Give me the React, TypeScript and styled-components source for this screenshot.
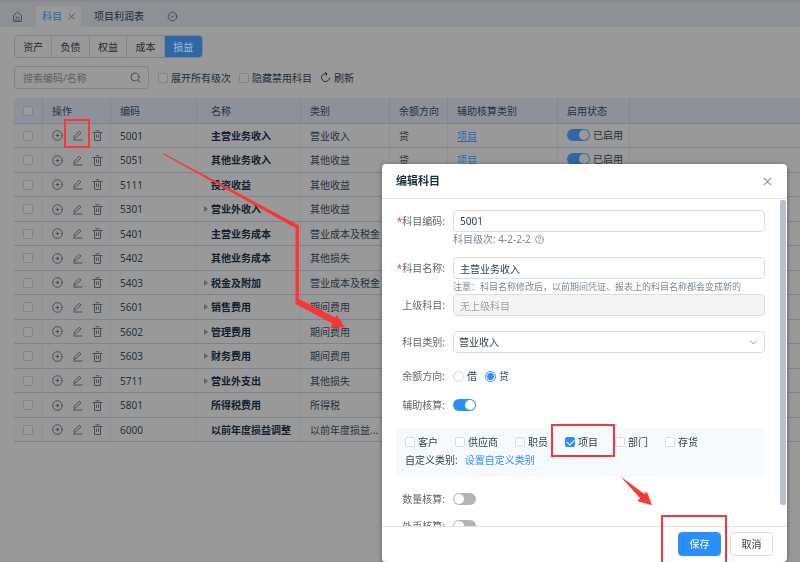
import React from 'react';
import styled, { createGlobalStyle, css } from 'styled-components';

const GlobalStyle = createGlobalStyle`
  * { box-sizing: border-box; }
  html, body { margin: 0; background: #999999; }
  body, button, input, select {
    font-family: "Noto Sans", "Noto Sans CJK SC", sans-serif;
    font-size: 10px;
  }
  body { line-height: 16px; color: #1f2f3d; overflow: hidden; }
  button { cursor: pointer; }
`;

const Page = styled.div`
  position: relative;
  min-height: 100vh;
  background: #999999;
`;

const TabBar = styled.nav`
  display: flex;
  align-items: center;
  height: 27px;
  padding: 3px 12px 0;
  background: #8d9095;
  border-top: 2px solid #87898c;
`;

const IconButton = styled.button`
  display: inline-flex;
  align-items: center;
  justify-content: center;
  width: 11px;
  height: 11px;
  padding: 0;
  border: 0;
  background: none;
  color: #46505a;
`;

const HomeButton = styled(IconButton)`
  margin-right: 13px;
`;

const MoreButton = styled(IconButton)`
  margin-left: 15px;
`;

const DialogClose = styled(IconButton)`
  color: #8b8f94;
`;

const Tab = styled.div<{ $active?: boolean }>`
  display: flex;
  align-items: center;
  gap: 4px;
  height: 21px;
  padding: 0 ${p => (p.$active ? 4 : 8)}px 0 6px;
  border-radius: 3px 3px 0 0;
  background: ${p => (p.$active ? '#999999' : 'transparent')};
  margin-right: ${p => (p.$active ? 7 : 0)}px;
`;

const TabLink = styled.button<{ $active?: boolean }>`
  padding: 0;
  border: 0;
  background: none;
  line-height: 16px;
  color: ${p => (p.$active ? '#2b69ac' : '#1f2a35')};
`;

const Content = styled.main`
  padding: 8px 0 0 14px;
`;

const Segments = styled.div`
  display: grid;
  grid-template-columns: repeat(5, 1fr);
  width: 189px;
  height: 23px;
  border: 1px solid #7f8388;
  border-radius: 4px;
  overflow: hidden;
`;

const Segment = styled.button<{ $active?: boolean }>`
  padding: 0;
  border: 0;
  border-right: 1px solid #838689;
  background: ${p => (p.$active ? '#2f68a5' : 'transparent')};
  color: ${p => (p.$active ? '#a3bdd9' : '#1f2a35')};
  &:last-child { border-right: 0; }
`;

const FilterBar = styled.div`
  display: flex;
  align-items: center;
  height: 23px;
  margin: 8px 0 9px;
`;

const SearchBox = styled.label`
  display: flex;
  align-items: center;
  width: 135px;
  height: 23px;
  margin-right: 9px;
  padding: 0 7px 0 8px;
  border: 1px solid #808386;
  border-radius: 4px;
  color: #46505a;
`;

const SearchInput = styled.input`
  flex: 1;
  min-width: 0;
  padding: 0;
  border: 0;
  outline: 0;
  background: none;
  color: #1f2a35;
  &::placeholder { color: #5d6165; opacity: 1; }
`;

const Box = styled.input<{ $dim?: boolean }>`
  appearance: none;
  display: block;
  position: relative;
  flex: none;
  width: 10px;
  height: 10px;
  margin: 0;
  border: 1px solid ${p => (p.$dim ? '#838587' : '#d9dce1')};
  border-radius: 2px;
  background: ${p => (p.$dim ? '#9b9b9b' : '#ffffff')};
  &:checked { background: #2b8ffb; border-color: #2b8ffb; }
  &:checked::after {
    content: '';
    position: absolute;
    left: 2px;
    top: 0;
    width: 4px;
    height: 6px;
    border: solid #ffffff;
    border-width: 0 1px 1px 0;
    transform: rotate(45deg);
  }
`;

const CheckLabel = styled.label`
  display: inline-flex;
  align-items: center;
  gap: 3px;
`;

const FilterCheck = styled(CheckLabel)`
  margin-right: 8px;
`;

const Refresh = styled.button`
  display: inline-flex;
  align-items: center;
  gap: 3px;
  padding: 0;
  border: 0;
  background: none;
  color: #1f2a35;
`;

const Table = styled.table`
  width: 100%;
  table-layout: fixed;
  border-spacing: 0;
  border-collapse: separate;
`;

const Column = styled.col<{ $w?: number }>`
  width: ${p => (p.$w ? `${p.$w}px` : 'auto')};
`;

const HeadCell = styled.th`
  height: 26px;
  padding: 0 0 0 9px;
  border-right: 1px solid #83878f;
  border-bottom: 1px solid #7b8392;
  background: #8e9199;
  font-weight: 400;
  text-align: left;
  color: #253341;
  &:first-child { border-top-left-radius: 4px; }
  &:last-child { border-right: 0; }
`;

const Row = styled.tr`
  height: 24px;
  &:nth-child(even) { height: 25px; }
`;

const Cell = styled.td<{ $strong?: boolean; $fixed?: boolean }>`
  padding: 0 0 0 9px;
  border-right: 1px solid #8d9094;
  border-bottom: 1px solid #7b8392;
  background: ${p => (p.$fixed ? '#979797' : 'transparent')};
  font-weight: ${p => (p.$strong ? 600 : 400)};
  color: ${p => (p.$strong ? '#13212e' : '#26323d')};
  white-space: nowrap;
  overflow: hidden;
  text-overflow: ellipsis;
  &:last-child { border-right: 0; }
`;

const Actions = styled.div`
  display: flex;
  gap: 9px;
`;

const NameLine = styled.div`
  display: flex;
  align-items: center;
  margin-left: -2px;
`;

const Toggle = styled.span<{ $shown: boolean }>`
  width: 7px;
  height: 6px;
  flex: none;
  display: flex;
  color: #5f6468;
  visibility: ${p => (p.$shown ? 'visible' : 'hidden')};
`;

const TableLink = styled.a`
  color: #2b69ac;
  text-decoration: underline;
  text-underline-offset: 1px;
`;

const Switch = styled.input<{ $dim?: boolean }>`
  appearance: none;
  display: block;
  position: relative;
  flex: none;
  width: 23px;
  height: 12px;
  margin: 0;
  border-radius: 6px;
  background: #b2b4b8;
  &::after {
    content: '';
    position: absolute;
    left: 1px;
    top: 1px;
    width: 10px;
    height: 10px;
    border-radius: 50%;
    background: ${p => (p.$dim ? '#999999' : '#ffffff')};
  }
  &:checked { background: ${p => (p.$dim ? '#2f68a5' : '#2b8ffb')}; }
  &:checked::after { left: 12px; }
`;

const Dialog = styled.section`
  position: fixed;
  top: 164px;
  right: 13px;
  bottom: 0;
  width: 405px;
  display: flex;
  flex-direction: column;
  border-radius: 4px;
  background: #ffffff;
  box-shadow: 0 1px 5px rgba(0, 0, 0, 0.4);
  overflow: hidden;
  color: #2b3f4e;
`;

const DialogHead = styled.header`
  display: flex;
  align-items: center;
  justify-content: space-between;
  flex: none;
  height: 35px;
  padding: 0 14px;
  border-bottom: 1px solid #e4e6e9;
`;

const DialogTitle = styled.h2`
  margin: 0;
  font-size: 11px;
  line-height: 16px;
  font-weight: 700;
  color: #16303f;
`;

const DialogBody = styled.form`
  position: relative;
  flex: 1;
  min-height: 0;
  overflow: hidden;
  padding: 11px 22px 0 14px;
`;

const ScrollThumb = styled.div`
  position: absolute;
  top: 1px;
  right: 1px;
  width: 6px;
  height: 305px;
  border-radius: 2px;
  background: #b9c0cb;
`;

const Field = styled.div<{ $gap?: number }>`
  display: grid;
  grid-template-columns: 49px 1fr;
  column-gap: 8px;
  align-items: center;
  margin-bottom: ${p => p.$gap ?? 0}px;
`;

const FieldLabel = styled.label<{ $required?: boolean }>`
  text-align: right;
  white-space: nowrap;
  color: #5f666d;
  ${p => p.$required && css`
    &::before { content: '*'; color: #f5433f; }
  `}
`;

const controlStyle = css`
  width: 100%;
  height: 22px;
  padding: 0 6px;
  border: 1px solid #d9dce1;
  border-radius: 4px;
  outline: 0;
  background: #ffffff;
  color: #2b3f4e;
`;

const TextInput = styled.input`
  ${controlStyle}
  &:disabled { background: #f5f5f6; color: #9a9fa6; }
`;

const SelectWrap = styled.div`
  display: grid;
  align-items: center;
  color: #8b939d;
  & > * { grid-area: 1 / 1; }
  & > svg { justify-self: end; margin-right: 7px; pointer-events: none; }
`;

const Select = styled.select`
  ${controlStyle}
  appearance: none;
  padding: 0 5px;
`;

const Hint = styled.p<{ $gap?: number }>`
  display: flex;
  align-items: center;
  gap: 4px;
  margin: 0 0 ${p => p.$gap ?? 0}px 57px;
  font-size: 9px;
  line-height: 15px;
  white-space: nowrap;
  color: #7b8794;
`;

const LevelHint = styled(Hint)`
  font-size: 10px;
`;

const Radios = styled.div`
  display: flex;
  gap: 8px;
`;

const Radio = styled.input`
  appearance: none;
  width: 11px;
  height: 11px;
  margin: 0;
  border: 1px solid #d4d7dc;
  border-radius: 50%;
  background: #ffffff;
  &:checked {
    border-color: #2b8ffb;
    background: radial-gradient(circle, #2b8ffb 0 3px, #ffffff 4px);
  }
`;

const AuxPanel = styled.div`
  height: 50px;
  margin-bottom: 14px;
  padding: 7px 9px;
  border-radius: 3px;
  background: #f7fafc;
`;

const AuxRow = styled.div`
  display: flex;
  gap: 17px;
  line-height: 16px;
  margin-bottom: 2px;
`;

const CustomRow = styled.div`
  display: flex;
  gap: 7px;
`;

const Link = styled.a`
  color: #2b8ffb;
  text-decoration: none;
`;

const DialogFoot = styled.footer`
  display: flex;
  align-items: center;
  justify-content: flex-end;
  gap: 9px;
  flex: none;
  height: 36px;
  padding: 0 14px 2px;
  border-top: 1px solid #dfe1e4;
`;

const Button = styled.button<{ $primary?: boolean }>`
  width: 43px;
  height: 24px;
  padding: 0;
  border: 1px solid ${p => (p.$primary ? '#2b8ffb' : '#d9dce1')};
  border-radius: 4px;
  background: ${p => (p.$primary ? '#2b8ffb' : '#ffffff')};
  color: ${p => (p.$primary ? '#ffffff' : '#2b3f4e')};
`;

const Marks = styled.svg`
  position: fixed;
  top: 0;
  right: 0;
  pointer-events: none;
`;

const iconProps = {
  fill: 'none',
  stroke: 'currentColor',
  strokeWidth: 1,
  strokeLinecap: 'round' as const,
  strokeLinejoin: 'round' as const,
};

const HomeIcon = () => (
  <svg width="11" height="11" viewBox="0 0 11 11" {...iconProps} aria-hidden="true">
    <path d="M1.500 10V4.500L5.500 1l4 3.500V10zM4 10V7.500a1.500 1.500 0 0 1 3 0V10" />
  </svg>
);
const MoreIcon = () => (
  <svg width="11" height="11" viewBox="0 0 11 11" {...iconProps} aria-hidden="true">
    <circle cx="5.500" cy="5.500" r="4.300" />
    <path d="M3.700 4.800l1.800 1.700 1.800-1.700" />
  </svg>
);
const CloseIcon = ({ size = 7 }: { size?: number }) => (
  <svg width={size} height={size} viewBox="0 0 8 8" {...iconProps} aria-hidden="true">
    <path d="M1 1l6 6M7 1L1 7" />
  </svg>
);
const SearchIcon = () => (
  <svg width="11" height="11" viewBox="0 0 11 11" {...iconProps} aria-hidden="true">
    <circle cx="5" cy="5" r="4" />
    <path d="M8 8l2 2" />
  </svg>
);
const RefreshIcon = () => (
  <svg width="11" height="11" viewBox="0 0 11 11" {...iconProps} aria-hidden="true">
    <path d="M9.500 6a4 4 0 1 1-3-4.300M6.200 3.300l.7-1.700-1.600-.9" />
  </svg>
);
const AddIcon = () => (
  <svg width="11" height="11" viewBox="0 0 11 11" {...iconProps} aria-hidden="true">
    <circle cx="5.500" cy="5.500" r="4.800" />
    <path d="M4 5.500h3M5.500 4v3" />
  </svg>
);
const EditIcon = () => (
  <svg width="11" height="11" viewBox="0 0 11 11" {...iconProps} aria-hidden="true">
    <path d="M2 8l.5-2L7.300 1.200 9 2.900 4 7.600zM1.500 10h8.500" />
  </svg>
);
const TrashIcon = () => (
  <svg width="11" height="11" viewBox="0 0 11 11" {...iconProps} aria-hidden="true">
    <path d="M1 2.500h9M2.500 2.500v8h6v-8M4 .800h3M4.500 4.800v2.700M6.500 4.800v2.700" />
  </svg>
);
const HelpIcon = () => (
  <svg width="9" height="9" viewBox="0 0 9 9" {...iconProps} strokeWidth={0.8} aria-hidden="true">
    <circle cx="4.500" cy="4.500" r="3.900" />
    <path d="M3.300 3.500a1.200 1.200 0 1 1 1.800 1c-.5.300-.6.500-.6.900M4.500 6.700v.1" />
  </svg>
);
const ChevronIcon = () => (
  <svg width="9" height="9" viewBox="0 0 9 9" {...iconProps} aria-hidden="true">
    <path d="M1.500 3l3 3 3-3" />
  </svg>
);

type Subject = { code: string; name: string; kind: string; parent?: boolean; aux?: boolean };

const subjects: Subject[] = [
  { code: '5001', name: '主营业务收入', kind: '营业收入', aux: true },
  { code: '5051', name: '其他业务收入', kind: '其他收益', aux: true },
  { code: '5111', name: '投资收益', kind: '其他收益' },
  { code: '5301', name: '营业外收入', kind: '其他收益', parent: true },
  { code: '5401', name: '主营业务成本', kind: '营业成本及税金' },
  { code: '5402', name: '其他业务成本', kind: '其他损失' },
  { code: '5403', name: '税金及附加', kind: '营业成本及税金', parent: true },
  { code: '5601', name: '销售费用', kind: '期间费用', parent: true },
  { code: '5602', name: '管理费用', kind: '期间费用', parent: true },
  { code: '5603', name: '财务费用', kind: '期间费用', parent: true },
  { code: '5711', name: '营业外支出', kind: '其他损失', parent: true },
  { code: '5801', name: '所得税费用', kind: '所得税' },
  { code: '6000', name: '以前年度损益调整', kind: '以前年度损益...' },
];

const columnWidths = [29, 68, 86, 104, 89, 58, 110, 72];
const headings = ['操作', '编码', '名称', '类别', '余额方向', '辅助核算类别', '启用状态', ''];

const HeadName = styled.span<{ $indent: boolean }>`
  margin-left: ${p => (p.$indent ? 5 : 0)}px;
`;

const SubjectRow = ({ item }: { item: Subject }) => (
  <Row>
    <Cell $fixed><Box type="checkbox" $dim aria-label={`选择 ${item.code}`} /></Cell>
    <Cell $fixed>
      <Actions>
        <IconButton aria-label="新增"><AddIcon /></IconButton>
        <IconButton aria-label="编辑"><EditIcon /></IconButton>
        <IconButton aria-label="删除"><TrashIcon /></IconButton>
      </Actions>
    </Cell>
    <Cell>{item.code}</Cell>
    <Cell $strong>
      <NameLine>
        <Toggle $shown={!!item.parent}>
          <svg width="5" height="6" viewBox="0 0 5 6" aria-hidden="true"><path d="M0 0l4 3-4 3z" fill="currentColor" /></svg>
        </Toggle>
        {item.name}
      </NameLine>
    </Cell>
    <Cell>{item.kind}</Cell>
    <Cell>{item.aux && '贷'}</Cell>
    <Cell>{item.aux && <TableLink href="#aux">项目</TableLink>}</Cell>
    <Cell>
      {item.aux && (
        <CheckLabel><Switch type="checkbox" role="switch" $dim defaultChecked />已启用</CheckLabel>
      )}
    </Cell>
    <Cell />
  </Row>
);

const auxKinds = ['客户', '供应商', '职员', '项目', '部门', '存货'];

export default function App() {
  return (
    <Page>
      <GlobalStyle />
      <TabBar>
        <HomeButton aria-label="首页"><HomeIcon /></HomeButton>
        <Tab $active>
          <TabLink $active>科目</TabLink>
          <IconButton aria-label="关闭"><CloseIcon /></IconButton>
        </Tab>
        <Tab><TabLink>项目利润表</TabLink></Tab>
        <MoreButton aria-label="更多"><MoreIcon /></MoreButton>
      </TabBar>

      <Content>
        <Segments>
          {['资产', '负债', '权益', '成本', '损益'].map(s => (
            <Segment key={s} $active={s === '损益'}>{s}</Segment>
          ))}
        </Segments>
        <FilterBar>
          <SearchBox>
            <SearchInput placeholder="搜索编码/名称" aria-label="搜索编码/名称" />
            <SearchIcon />
          </SearchBox>
          <FilterCheck><Box type="checkbox" $dim />展开所有级次</FilterCheck>
          <FilterCheck><Box type="checkbox" $dim />隐藏禁用科目</FilterCheck>
          <Refresh><RefreshIcon />刷新</Refresh>
        </FilterBar>

        <Table>
          <colgroup>
            {columnWidths.map((w, i) => <Column key={i} $w={w} />)}
            <Column />
          </colgroup>
          <thead>
            <tr>
              <HeadCell><Box type="checkbox" $dim aria-label="全选" /></HeadCell>
              {headings.map((h, i) => (
                <HeadCell key={i}><HeadName $indent={h === '名称'}>{h}</HeadName></HeadCell>
              ))}
            </tr>
          </thead>
          <tbody>{subjects.map(s => <SubjectRow key={s.code} item={s} />)}</tbody>
        </Table>
      </Content>

      <Dialog role="dialog" aria-labelledby="dialog-title">
        <DialogHead>
          <DialogTitle id="dialog-title">编辑科目</DialogTitle>
          <DialogClose aria-label="关闭"><CloseIcon size={9} /></DialogClose>
        </DialogHead>
        <DialogBody>
          <Field>
            <FieldLabel htmlFor="code" $required>科目编码:</FieldLabel>
            <TextInput id="code" defaultValue="5001" />
          </Field>
          <LevelHint $gap={10}>科目级次: 4-2-2-2 <HelpIcon /></LevelHint>
          <Field>
            <FieldLabel htmlFor="name" $required>科目名称:</FieldLabel>
            <TextInput id="name" defaultValue="主营业务收入" />
          </Field>
          <Hint>注意：科目名称修改后，以前期间凭证、报表上的科目名称都会变成新的</Hint>
          <Field $gap={15}>
            <FieldLabel htmlFor="parent">上级科目:</FieldLabel>
            <TextInput id="parent" defaultValue="无上级科目" disabled />
          </Field>
          <Field $gap={15}>
            <FieldLabel htmlFor="kind">科目类别:</FieldLabel>
            <SelectWrap>
              <Select id="kind"><option>营业收入</option></Select>
              <ChevronIcon />
            </SelectWrap>
          </Field>
          <Field $gap={13}>
            <FieldLabel as="span">余额方向:</FieldLabel>
            <Radios role="radiogroup" aria-label="余额方向">
              <CheckLabel><Radio type="radio" name="side" />借</CheckLabel>
              <CheckLabel><Radio type="radio" name="side" defaultChecked />贷</CheckLabel>
            </Radios>
          </Field>
          <Field $gap={14}>
            <FieldLabel htmlFor="aux">辅助核算:</FieldLabel>
            <Switch id="aux" type="checkbox" role="switch" defaultChecked />
          </Field>
          <AuxPanel>
            <AuxRow>
              {auxKinds.map(k => (
                <CheckLabel key={k}><Box type="checkbox" defaultChecked={k === '项目'} />{k}</CheckLabel>
              ))}
            </AuxRow>
            <CustomRow>
              <span>自定义类别:</span>
              <Link href="#custom">设置自定义类别</Link>
            </CustomRow>
          </AuxPanel>
          <Field $gap={11}>
            <FieldLabel htmlFor="qty">数量核算:</FieldLabel>
            <Switch id="qty" type="checkbox" role="switch" />
          </Field>
          <Field>
            <FieldLabel htmlFor="fx">外币核算:</FieldLabel>
            <Switch id="fx" type="checkbox" role="switch" />
          </Field>
          <ScrollThumb />
        </DialogBody>
        <DialogFoot>
          <Button $primary>保存</Button>
          <Button>取消</Button>
        </DialogFoot>
      </Dialog>

      <Marks width="800" height="562" viewBox="0 0 800 562" aria-hidden="true">
        <g fill="none" stroke="#fb3636" strokeWidth="2">
          <rect x="65" y="120" width="24" height="27" />
          <rect x="552" y="425" width="62" height="31" />
          <rect x="662" y="516" width="64" height="50" />
        </g>
        <g fill="#fb3636">
          <path d="M164 153.500L299 225.500V299L335 317.500 337 315 345 327.500H330L332.500 323.500 295.500 304V228L163.500 154.500z" />
          <path d="M620.500 476.500L644.500 494 646.700 491.500 652 505.200 637.300 501 640 498.300z" />
        </g>
      </Marks>
    </Page>
  );
}
